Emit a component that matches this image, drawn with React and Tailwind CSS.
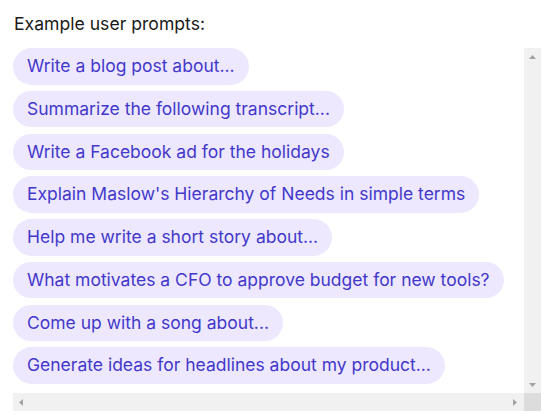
import React from 'react';

const PROMPTS = [
  'Write a blog post about...',
  'Summarize the following transcript...',
  'Write a Facebook ad for the holidays',
  "Explain Maslow's Hierarchy of Needs in simple terms",
  'Help me write a short story about...',
  'What motivates a CFO to approve budget for new tools?',
  'Come up with a song about...',
  'Generate ideas for headlines about my product...',
];

// little arrow glyphs for the fake classic scrollbars
function Arrow({ dir }) {
  const pts = {
    up: '0,4 3.5,0 7,4',
    down: '0,0 7,0 3.5,4',
    left: '4,0 4,7 0,3.5',
    right: '0,0 0,7 4,3.5',
  }[dir];
  const vertical = dir === 'up' || dir === 'down';
  return (
    <svg width={vertical ? 7 : 4} height={vertical ? 4 : 7} viewBox={vertical ? '0 0 7 4' : '0 0 4 7'}>
      <polygon points={pts} fill="#a3a3a3" />
    </svg>
  );
}

export default function App() {
  return (
    <div className="w-[555px] h-[416px] bg-white font-['Inter',sans-serif] overflow-hidden">
      <div className="pl-[14px] pt-[12px] text-[17.6px] leading-6 text-[#1a1a1a]">Example user prompts:</div>

      <div className="ml-[13px] mt-[12px] w-[528px] h-[363px] flex flex-col">
        <div className="flex flex-1 min-h-0">
          <div className="flex-1 overflow-hidden flex flex-col items-start gap-[6.25px]">
            {PROMPTS.map((p) => (
              <div
                key={p}
                className="h-[36.5px] shrink-0 flex items-center px-[14px] rounded-full bg-[#ede8fe] text-[#4338ca] text-[17.5px] whitespace-nowrap"
              >
                {p}
              </div>
            ))}
          </div>
          <div className="w-[17px] bg-[#f1f1f1] flex flex-col items-center justify-between pt-[7px] pb-[6px]">
            <Arrow dir="up" />
            <Arrow dir="down" />
          </div>
        </div>
        <div className="flex h-[18px]">
          <div className="flex-1 bg-[#f1f1f1] flex items-center justify-between pl-[6px] pr-[7px]">
            <Arrow dir="left" />
            <Arrow dir="right" />
          </div>
          <div className="w-[17px] bg-[#dcdcdc]" />
        </div>
      </div>
    </div>
  );
}
